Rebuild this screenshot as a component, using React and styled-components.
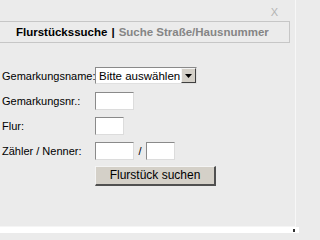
import React from 'react';
import styled, { createGlobalStyle } from 'styled-components';

const Global = createGlobalStyle`
  html, body { margin: 0; padding: 0; background: #ebebeb; }
  #root { width: 299px; height: 233px; overflow: hidden; }
`;

const Page = styled.div`
  width: 299px;
  height: 233px;
  display: flex;
  flex-direction: column;
  background: #ebebeb;
  font-family: "Liberation Sans", sans-serif;
`;

const Panel = styled.div`
  flex: 0 0 227px;
  width: 296px;
  border-right: 1px solid #f7f7f7;
  box-sizing: border-box;
  border-bottom: 1px solid #f5f5f5;
`;

const TopBar = styled.div`
  height: 21px;
  display: flex;
  justify-content: flex-end;
  padding-right: 17px;
`;

const Close = styled.span`
  font-size: 11px;
  color: #b4b4b4;
  line-height: 1;
  margin-top: 7px;
`;

const Tabs = styled.div`
  width: 290px;
  height: 22px;
  box-sizing: border-box;
  border: 1px solid #c6c6c6;
  border-left: none;
  display: flex;
  align-items: center;
  padding-left: 16px;
  font-weight: bold;
  font-size: 11.5px;
  white-space: nowrap;
`;

const Tab = styled.span`
  color: ${p => (p.$active ? '#000' : '#858585')};
`;

const Sep = styled.span`
  color: #000;
  margin: 0 4px;
`;

const Form = styled.div`
  margin-top: 20px;
  display: flex;
  flex-direction: column;
`;

const Row = styled.div`
  height: 25px;
  display: flex;
  align-items: center;
`;

const Label = styled.label`
  width: 95px;
  padding-left: 2px;
  box-sizing: border-box;
  font-size: 11px;
  color: #000;
  white-space: nowrap;
`;

const Input = styled.div`
  width: ${p => p.$w}px;
  height: 18px;
  box-sizing: border-box;
  background: #fff;
  border-style: solid;
  border-width: 1px;
  border-color: #8a8a8a #dcdcdc #dcdcdc #8a8a8a;
`;

const Slash = styled.span`
  font-size: 11px;
  width: 12px;
  text-align: center;
`;

const Select = styled.div`
  width: 102px;
  height: 17px;
  box-sizing: border-box;
  background: #fff;
  border-style: solid;
  border-width: 1px;
  border-color: #8a8a8a #e0e0e0 #e0e0e0 #8a8a8a;
  display: flex;
  align-items: center;
  font-size: 11.5px;
  color: #000;
`;

const SelectText = styled.span`
  flex: 1;
  padding-left: 3px;
  white-space: nowrap;
  overflow: hidden;
`;

const Arrow = styled.span`
  flex: 0 0 15px;
  height: 15px;
  box-sizing: border-box;
  background: #d4d0c8;
  border-style: solid;
  border-width: 1px;
  border-color: #f4f4f4 #404040 #404040 #f4f4f4;
  display: flex;
  align-items: center;
  justify-content: center;
`;

const Button = styled.button`
  width: 121px;
  height: 20px;
  margin: 0;
  padding: 0;
  box-sizing: border-box;
  background: #d4d0c8;
  border-style: solid;
  border-width: 1px 2px 2px 1px;
  border-color: #f4f4f4 #505050 #505050 #f4f4f4;
  font-family: "Liberation Sans", sans-serif;
  font-size: 12px;
  color: #000;
`;

const Footer = styled.div`
  flex: 1;
  background: #fff;
  display: flex;
  justify-content: flex-end;
  padding-right: 4px;
`;

const Mark = styled.span`
  width: 2px;
  height: 3px;
  margin-top: 2px;
  background: #333;
`;

export default function App() {
  return (
    <Page>
      <Global />
      <Panel>
        <TopBar><Close>X</Close></TopBar>
        <Tabs>
          <Tab $active>Flurstückssuche</Tab>
          <Sep>|</Sep>
          <Tab>Suche Straße/Hausnummer</Tab>
        </Tabs>
        <Form>
          <Row>
            <Label>Gemarkungsname:</Label>
            <Select>
              <SelectText>Bitte auswählen</SelectText>
              <Arrow>
                <svg width="7" height="4" viewBox="0 0 7 4"><path d="M0 0h7L3.5 4z" fill="#000" /></svg>
              </Arrow>
            </Select>
          </Row>
          <Row>
            <Label>Gemarkungsnr.:</Label>
            <Input $w={39} />
          </Row>
          <Row>
            <Label>Flur:</Label>
            <Input $w={29} />
          </Row>
          <Row>
            <Label>Zähler / Nenner:</Label>
            <Input $w={39} />
            <Slash>/</Slash>
            <Input $w={29} />
          </Row>
          <Row>
            <Label />
            <Button>Flurstück suchen</Button>
          </Row>
        </Form>
      </Panel>
      <Footer><Mark /></Footer>
    </Page>
  );
}
